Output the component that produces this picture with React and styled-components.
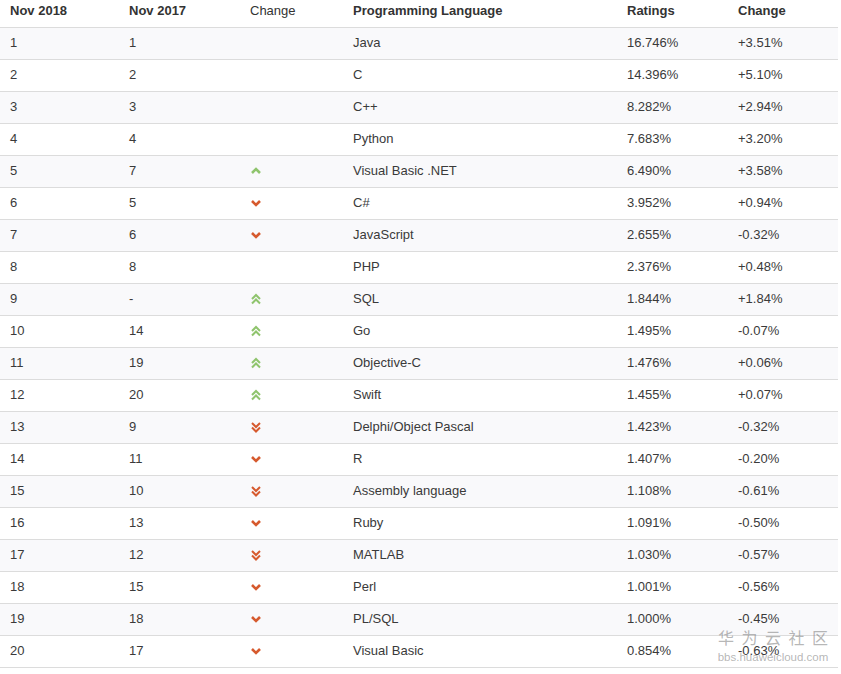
import React from "react";
import styled, { createGlobalStyle } from "styled-components";

const GlobalStyle = createGlobalStyle`
  body {
    margin: 0;
    background: #fff;
    font-family: "Liberation Sans", Arial, sans-serif;
  }
`;

const Page = styled.div`
  position: relative;
  width: 841px;
  height: 674px;
  overflow: hidden;
`;

const Table = styled.div`
  width: 838px;
  display: flex;
  flex-direction: column;
`;

const cols = "119px 121px 103px 274px 111px 110px";

const HeadRow = styled.div`
  display: grid;
  grid-template-columns: ${cols};
  height: 27px;
  border-bottom: 1px solid #dcdcdc;
`;

const HeadCell = styled.div`
  padding: 3px 0 0 10px;
  font-size: 13px;
  line-height: 16px;
  font-weight: ${(p) => (p.$light ? "normal" : "bold")};
  color: #333;
`;

const Row = styled.div`
  display: grid;
  grid-template-columns: ${cols};
  height: 31px;
  border-bottom: 1px solid #dcdcdc;
  background: ${(p) => (p.$odd ? "#f9f9fb" : "#fff")};
`;

const Cell = styled.div`
  display: flex;
  align-items: center;
  padding: 0 0 2px 10px;
  font-size: 13px;
  color: #3a3a3a;
  white-space: nowrap;
`;

const Watermark = styled.div`
  position: absolute;
  left: 717px;
  top: 627px;
  width: 112px;
  display: flex;
  flex-direction: column;
  align-items: center;
  color: rgba(120, 120, 120, 0.55);
  pointer-events: none;
`;

const WmTitle = styled.div`
  font-family: "Noto Sans CJK SC", sans-serif;
  font-size: 16px;
  line-height: 20px;
  letter-spacing: 7.5px;
  margin-right: -7.5px;
`;

const WmSub = styled.div`
  font-family: "Liberation Sans", Arial, sans-serif;
  font-size: 11.5px;
  line-height: 13px;
  margin-top: 4px;
`;

const GREEN = "#8fc46d";
const RED = "#d65a2e";

const Chevron = ({ dir, double }) => {
  const color = dir === "up" ? GREEN : RED;
  const one = (y) =>
    dir === "up"
      ? `M2 ${y + 5} L6 ${y + 1} L10 ${y + 5}`
      : `M2 ${y + 1} L6 ${y + 5} L10 ${y + 1}`;
  return (
    <svg width="12" height="12" viewBox="0 0 12 12">
      {double ? (
        <>
          <path d={one(1)} fill="none" stroke={color} strokeWidth="2" />
          <path d={one(5.5)} fill="none" stroke={color} strokeWidth="2" />
        </>
      ) : (
        <path d={one(3)} fill="none" stroke={color} strokeWidth="2.6" />
      )}
    </svg>
  );
};

const data = [
  [1, 1, null, "Java", "16.746%", "+3.51%"],
  [2, 2, null, "C", "14.396%", "+5.10%"],
  [3, 3, null, "C++", "8.282%", "+2.94%"],
  [4, 4, null, "Python", "7.683%", "+3.20%"],
  [5, 7, "up", "Visual Basic .NET", "6.490%", "+3.58%"],
  [6, 5, "down", "C#", "3.952%", "+0.94%"],
  [7, 6, "down", "JavaScript", "2.655%", "-0.32%"],
  [8, 8, null, "PHP", "2.376%", "+0.48%"],
  [9, "-", "up2", "SQL", "1.844%", "+1.84%"],
  [10, 14, "up2", "Go", "1.495%", "-0.07%"],
  [11, 19, "up2", "Objective-C", "1.476%", "+0.06%"],
  [12, 20, "up2", "Swift", "1.455%", "+0.07%"],
  [13, 9, "down2", "Delphi/Object Pascal", "1.423%", "-0.32%"],
  [14, 11, "down", "R", "1.407%", "-0.20%"],
  [15, 10, "down2", "Assembly language", "1.108%", "-0.61%"],
  [16, 13, "down", "Ruby", "1.091%", "-0.50%"],
  [17, 12, "down2", "MATLAB", "1.030%", "-0.57%"],
  [18, 15, "down", "Perl", "1.001%", "-0.56%"],
  [19, 18, "down", "PL/SQL", "1.000%", "-0.45%"],
  [20, 17, "down", "Visual Basic", "0.854%", "-0.63%"],
];

const renderChange = (c) => {
  if (!c) return null;
  const dir = c.startsWith("up") ? "up" : "down";
  return <Chevron dir={dir} double={c.endsWith("2")} />;
};

export default function App() {
  return (
    <Page>
      <GlobalStyle />
      <Table>
        <HeadRow>
          <HeadCell>Nov 2018</HeadCell>
          <HeadCell>Nov 2017</HeadCell>
          <HeadCell $light>Change</HeadCell>
          <HeadCell>Programming Language</HeadCell>
          <HeadCell>Ratings</HeadCell>
          <HeadCell>Change</HeadCell>
        </HeadRow>
        {data.map((r, i) => (
          <Row key={r[0]} $odd={i % 2 === 0}>
            <Cell>{r[0]}</Cell>
            <Cell>{r[1]}</Cell>
            <Cell>{renderChange(r[2])}</Cell>
            <Cell>{r[3]}</Cell>
            <Cell>{r[4]}</Cell>
            <Cell>{r[5]}</Cell>
          </Row>
        ))}
      </Table>
      <Watermark>
        <WmTitle>华为云社区</WmTitle>
        <WmSub>bbs.huaweicloud.com</WmSub>
      </Watermark>
    </Page>
  );
}
